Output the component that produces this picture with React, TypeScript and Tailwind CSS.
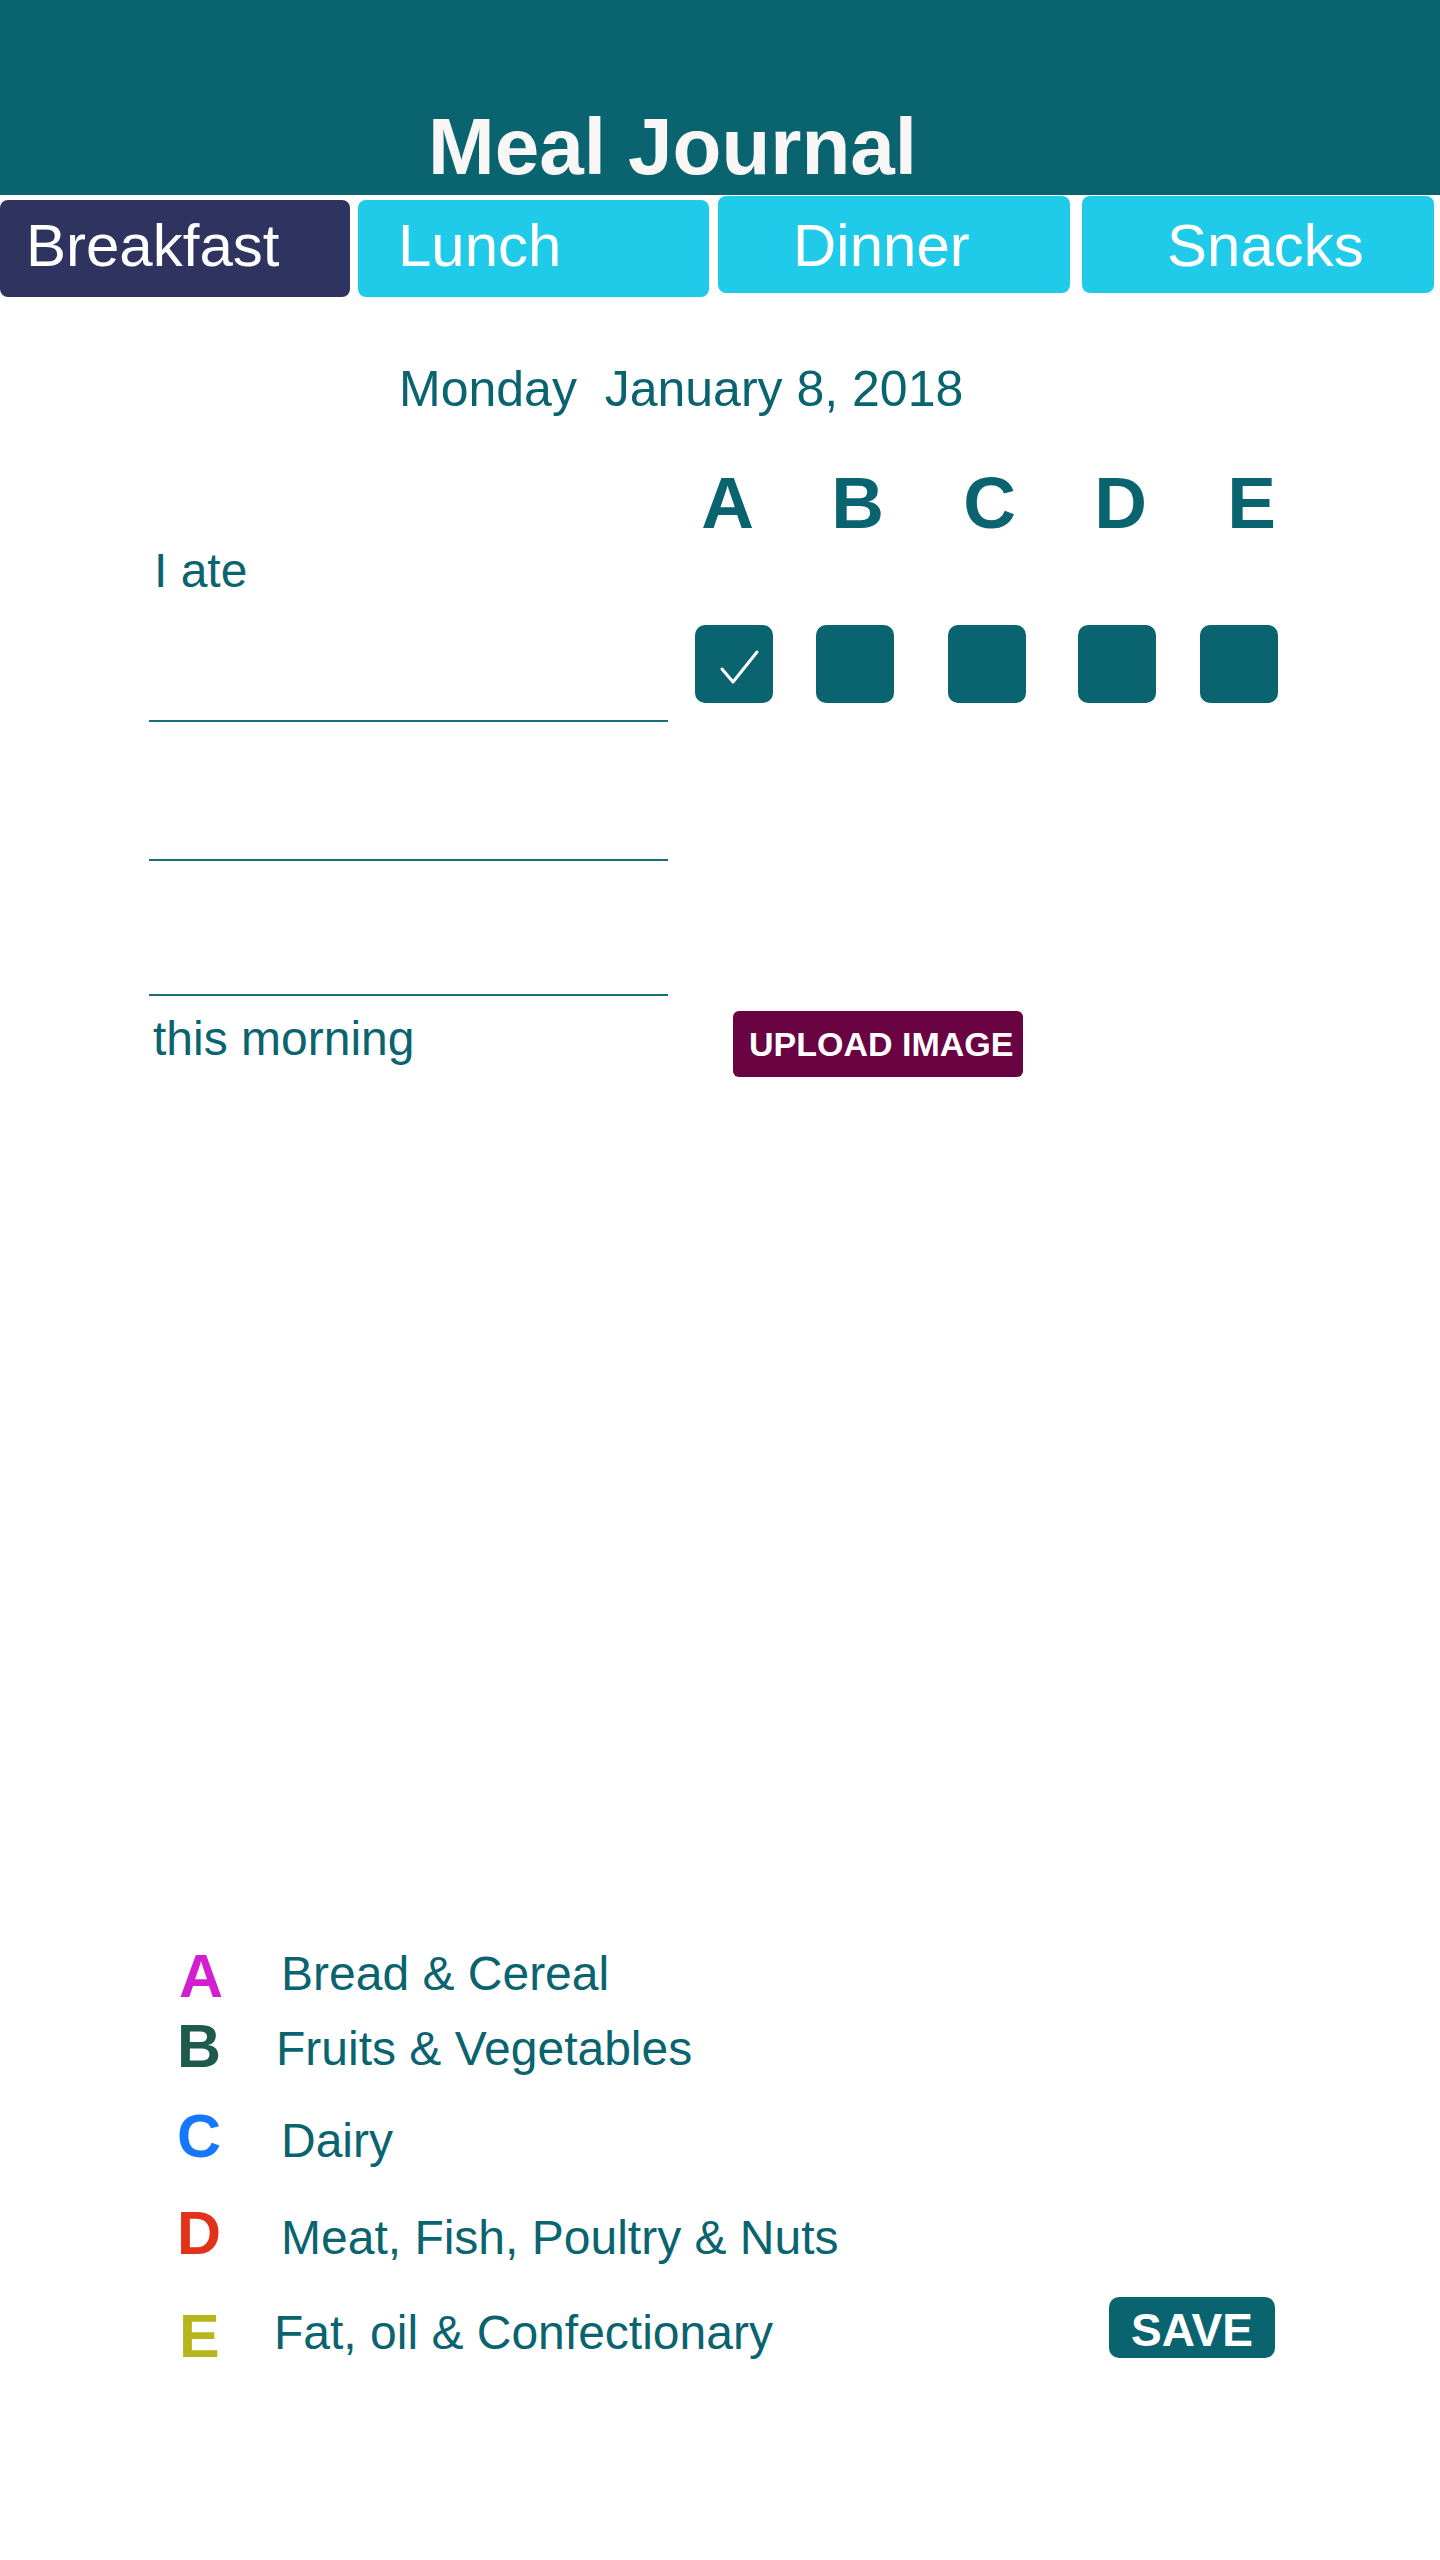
import React from "react";

export default function App() {
  return (
    <div className="min-h-[2560px] bg-white font-[family-name:'Liberation_Sans',Arial,sans-serif] text-[#0a6470]">
      <header className="h-[195px] bg-[#0a6470] pt-[107px] pl-[428px]">
        <h1 className="text-[80px] leading-none font-bold text-[#f9f7f5]">Meal Journal</h1>
      </header>

      <nav className="flex items-start">
        <div className="mt-[5px] w-[350px] h-[97px] rounded-lg bg-[#2e335f] pt-[16px] pl-[26px] text-[60px] leading-none text-white">
          Breakfast
        </div>
        <div className="mt-[5px] ml-[8px] w-[351px] h-[97px] rounded-lg bg-[#20cbe9] pt-[16px] pl-[40px] text-[60px] leading-none text-white">
          Lunch
        </div>
        <div className="mt-[1px] ml-[9px] w-[352px] h-[97px] rounded-lg bg-[#20cbe9] pt-[20px] pl-[75px] text-[60px] leading-none text-white">
          Dinner
        </div>
        <div className="mt-[1px] ml-[12px] w-[352px] h-[97px] rounded-lg bg-[#20cbe9] pt-[20px] pl-[85px] text-[60px] leading-none text-white">
          Snacks
        </div>
      </nav>

      <p className="mt-[67px] pl-[399px] text-[50px] leading-none whitespace-pre">Monday  January 8, 2018</p>

      <div className="flex items-start">
        <div className="ml-[149px] w-[519px] flex flex-col">
          <p className="mt-[133px] ml-[5px] text-[48px] leading-none">I ate</p>
          <div className="mt-[125px] h-[2px] bg-[#1a6e78]" />
          <div className="mt-[137px] h-[2px] bg-[#1a6e78]" />
          <div className="mt-[133px] h-[2px] bg-[#1a6e78]" />
          <p className="mt-[19px] ml-[4px] text-[48px] leading-none">this morning</p>
        </div>

        <div className="ml-[27px] flex flex-col">
          <div className="mt-[52px] flex pl-[6px] text-[73px] leading-none font-bold">
            <span className="w-[53px] text-center">A</span>
            <span className="ml-[77px] w-[53px] text-center">B</span>
            <span className="ml-[79px] w-[53px] text-center">C</span>
            <span className="ml-[78px] w-[53px] text-center">D</span>
            <span className="ml-[78px] w-[53px] text-center">E</span>
          </div>
          <div className="mt-[86px] flex">
            <div className="w-[78px] h-[78px] rounded-[10px] bg-[#0a6470]">
              <svg viewBox="0 0 78 78" width="78" height="78">
                <polyline points="27,44 38,57 62,27" fill="none" stroke="white" strokeWidth="3" strokeLinecap="round" strokeLinejoin="round" />
              </svg>
            </div>
            <div className="ml-[43px] w-[78px] h-[78px] rounded-[10px] bg-[#0a6470]" />
            <div className="ml-[54px] w-[78px] h-[78px] rounded-[10px] bg-[#0a6470]" />
            <div className="ml-[52px] w-[78px] h-[78px] rounded-[10px] bg-[#0a6470]" />
            <div className="ml-[44px] w-[78px] h-[78px] rounded-[10px] bg-[#0a6470]" />
          </div>
          <button className="mt-[308px] ml-[38px] w-[290px] h-[66px] rounded-md bg-[#6a0342] pl-[16px] flex items-center text-[34px] leading-none font-bold text-white self-start">
            UPLOAD IMAGE
          </button>
        </div>
      </div>

      <div className="pl-[177px] mt-[869px] flex flex-col">
        <div className="flex items-start">
          <span className="w-[104px] text-[61px] leading-none font-bold text-[#d41fd0] pl-[2px]">A</span>
          <span className="mt-[4px] text-[48px] leading-none">Bread &amp; Cereal</span>
        </div>
        <div className="mt-[9px] flex items-start">
          <span className="w-[104px] text-[61px] leading-none font-bold text-[#1e5b4c]">B</span>
          <span className="mt-[9px] ml-[-5px] text-[48px] leading-none">Fruits &amp; Vegetables</span>
        </div>
        <div className="mt-[29px] flex items-start">
          <span className="w-[104px] text-[61px] leading-none font-bold text-[#1677fa]">C</span>
          <span className="mt-[11px] text-[48px] leading-none">Dairy</span>
        </div>
        <div className="mt-[36px] flex items-start">
          <span className="w-[104px] text-[61px] leading-none font-bold text-[#e2321a]">D</span>
          <span className="mt-[11px] text-[48px] leading-none">Meat, Fish, Poultry &amp; Nuts</span>
        </div>
        <div className="mt-[33px] w-[1098px] flex items-start">
          <span className="mt-[9px] w-[104px] pl-[2px] text-[61px] leading-none font-bold text-[#b6b61c]">E</span>
          <span className="mt-[12px] ml-[-7px] text-[48px] leading-none">Fat, oil &amp; Confectionary</span>
          <button className="ml-auto w-[166px] h-[61px] rounded-[10px] bg-[#0a6470] pt-[10px] flex items-start justify-center text-[46px] leading-none font-bold text-white">
            SAVE
          </button>
        </div>
      </div>
    </div>
  );
}
